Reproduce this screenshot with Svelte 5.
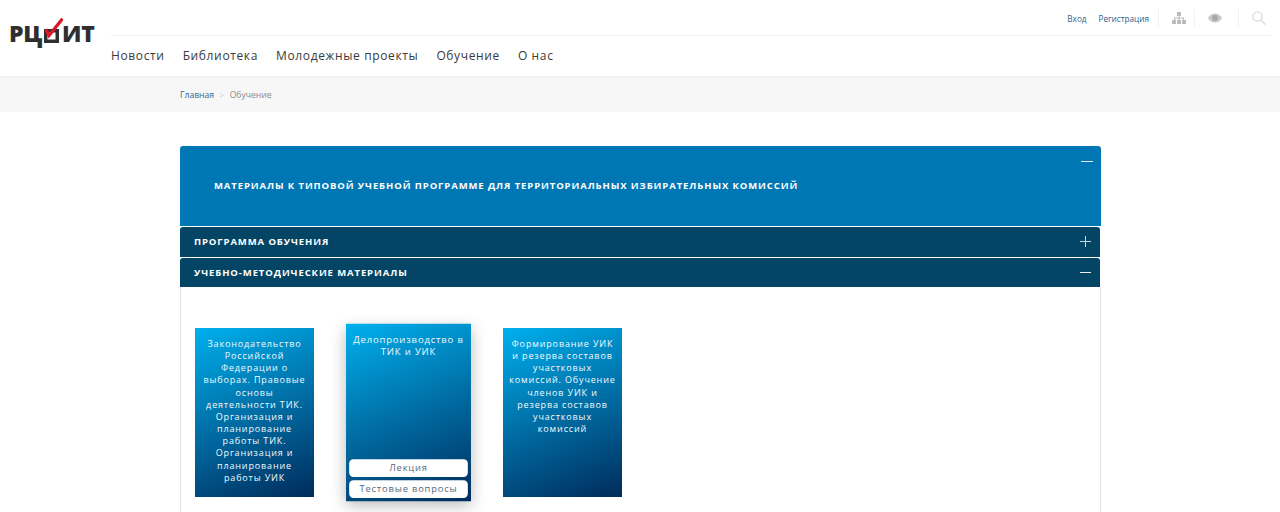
<script>
  const nav = ['Новости', 'Библиотека', 'Молодежные проекты', 'Обучение', 'О нас'];
</script>

<div class="page">
  <header class="header">
    <div class="logo" aria-label="РЦОИТ">
      <span class="logo-text">РЦ</span>
      <svg class="logo-box" width="20" height="28" viewBox="0 0 20 28">
        <rect x="2.75" y="12.75" width="11.5" height="10.5" fill="none" stroke="#2f2f2f" stroke-width="3.5" />
        <path d="M2.7 11.3 L6 17.6 L19.6 0.6" fill="none" stroke="#d9182a" stroke-width="3.2" />
      </svg>
      <span class="logo-text">ИТ</span>
    </div>
    <div class="head-main">
      <div class="top-bar">
        <a class="top-link" href="#a">Вход</a>
        <a class="top-link reg" href="#a">Регистрация</a>
        <span class="sep"></span>
        <svg class="ico" width="14" height="13" viewBox="0 0 14 13" fill="#bcbcbc">
          <rect x="5" y="0" width="4" height="4" />
          <rect x="6.5" y="4" width="1" height="2" />
          <rect x="2" y="5.5" width="10" height="1" />
          <rect x="2" y="6" width="1" height="2" />
          <rect x="11" y="6" width="1" height="2" />
          <rect x="6.5" y="6" width="1" height="2" />
          <rect x="0" y="8" width="4" height="4" />
          <rect x="5" y="8" width="4" height="4" />
          <rect x="10" y="8" width="4" height="4" />
        </svg>
        <span class="sep tight"></span>
        <svg class="ico" width="14" height="10" viewBox="0 0 14 10">
          <path d="M0 5 C3 -1 11 -1 14 5 C11 11 3 11 0 5Z" fill="#c9c9c9" />
          <circle cx="7" cy="5" r="3" fill="#a8a8a8" />
        </svg>
        <span class="sep wide"></span>
        <svg class="ico" width="14" height="14" viewBox="0 0 14 14" fill="none" stroke="#dcdcdc" stroke-width="1.4">
          <circle cx="5.5" cy="5.5" r="4.6" />
          <path d="M9 9 L13.5 13.5" />
        </svg>
      </div>
      <nav class="nav">
        {#each nav as item}
          <a href="#a">{item}</a>
        {/each}
      </nav>
    </div>
  </header>

  <div class="crumbs">
    <a href="#a">Главная</a>
    <span class="gt">&gt;</span>
    <span class="cur">Обучение</span>
  </div>

  <main class="panel">
    <div class="panel-head">
      <h2>Материалы к типовой учебной программе для территориальных избирательных комиссий</h2>
      <span class="minus top"></span>
    </div>
    <div class="row">
      <span>Программа обучения</span>
      <span class="plus"></span>
    </div>
    <div class="row second">
      <span>Учебно-методические материалы</span>
      <span class="minus"></span>
    </div>
    <div class="panel-body">
      <div class="card">
        Законодательство Российской Федерации о выборах. Правовые основы деятельности ТИК. Организация и планирование работы ТИК. Организация и планирование работы УИК
      </div>
      <div class="card active">
        <div class="card-title">Делопроизводство в ТИК и УИК</div>
        <div class="btns">
          <a href="#a">Лекция</a>
          <a href="#a">Тестовые вопросы</a>
        </div>
      </div>
      <div class="card">
        Формирование УИК и резерва составов участковых комиссий. Обучение членов УИК и резерва составов участковых комиссий
      </div>
    </div>
  </main>
</div>

<style>
  :global(body) {
    margin: 0;
    background: #fff;
    font-family: "Open Sans", sans-serif;
  }
  .page {
    height: 512px;
    overflow: hidden;
  }
  a {
    text-decoration: none;
  }
  .header {
    height: 76px;
    display: flex;
    background: #fff;
    box-shadow: 0 1px 3px rgba(0, 0, 0, 0.05);
    position: relative;
  }
  .logo {
    width: 111px;
    padding: 18px 0 0 9px;
    box-sizing: border-box;
    display: flex;
    align-items: flex-start;
    flex: none;
  }
  .logo-text {
    font-family: "Open Sans", sans-serif;
    font-weight: 800;
    font-size: 23px;
    line-height: 28px;
    margin-top: 1px;
    color: #2f2f2f;
    letter-spacing: -0.3px;
  }
  .logo-box {
    flex: none;
    margin: 0 -1px 0 1px;
  }
  .head-main {
    flex: 1;
    margin-right: 8px;
  }
  .top-bar {
    height: 36px;
    border-bottom: 1px solid #f2f2f2;
    display: flex;
    align-items: center;
    justify-content: flex-end;
    padding: 1px 6px 0 0;
    box-sizing: border-box;
  }
  .top-link {
    font-size: 8.2px;
    color: #33608a;
    margin-top: 1px;
  }
  .reg {
    margin-left: 12px;
  }
  .sep {
    width: 1px;
    height: 18px;
    background: #f2f2f2;
    margin: 0 13px 0 9px;
  }
  .sep.tight {
    margin-left: 8px;
  }
  .sep.wide {
    margin: 0 13px 0 16px;
  }
  .ico {
    flex: none;
  }
  .nav {
    display: flex;
    gap: 18px;
    padding-top: 11px;
  }
  .nav a {
    font-size: 12px;
    line-height: 18px;
    letter-spacing: 0.63px;
    color: #3a3a3a;
  }
  .crumbs {
    height: 36px;
    background: #f7f7f7;
    box-sizing: border-box;
    padding: 1px 0 0 180px;
    display: flex;
    align-items: center;
    font-size: 8.6px;
  }
  .crumbs a {
    color: #2f6a8f;
  }
  .gt {
    color: #c8c8c8;
    margin: 0 5.5px;
    font-size: 8px;
  }
  .cur {
    color: #8a8a8a;
  }
  .panel {
    width: 921px;
    margin: 34px 0 0 180px;
  }
  .panel-head {
    height: 80px;
    background: #0077b5;
    border-radius: 3px 3px 0 0;
    display: flex;
    align-items: center;
    padding: 0 33px 1px 34px;
    box-sizing: border-box;
    position: relative;
    margin-bottom: 1px;
  }
  h2 {
    margin: 0;
    font-size: 9.5px;
    font-weight: 700;
    letter-spacing: 0.9px;
    text-transform: uppercase;
    color: #fff;
  }
  .row {
    height: 30px;
    background: #044566;
    display: flex;
    align-items: center;
    justify-content: space-between;
    padding: 0 9px 1px 14px;
    box-sizing: border-box;
    font-size: 9.5px;
    font-weight: 700;
    letter-spacing: 0.9px;
    text-transform: uppercase;
    color: #fff;
    margin: 0 1px 1px 0;
    border-radius: 3px 3px 0 0;
  }
  .row.second {
    height: 29px;
    margin-bottom: 0;
    padding-bottom: 0;
  }
  .minus {
    width: 11px;
    height: 1px;
    background: #e8eef2;
  }
  .minus.top {
    position: absolute;
    right: 8px;
    top: 15px;
    width: 12px;
  }
  .plus {
    width: 11px;
    height: 11px;
    background:
      linear-gradient(#c9d8e0, #c9d8e0) center / 100% 1px no-repeat,
      linear-gradient(#c9d8e0, #c9d8e0) center / 1px 100% no-repeat;
  }
  .panel-body {
    border-left: 1px solid #e3e3e3;
    border-right: 1px solid #e3e3e3;
    padding: 41px 0 0 14px;
    display: flex;
    gap: 35px;
    height: 300px;
    box-sizing: border-box;
    align-items: flex-start;
  }
  .card {
    width: 119px;
    height: 169px;
    box-sizing: border-box;
    flex: none;
    background: linear-gradient(158deg, #00b0ee 0%, #002c5c 100%);
    color: #f2fafe;
    font-size: 9px;
    line-height: 12.15px;
    letter-spacing: 0.85px;
    text-align: center;
    padding: 10px 6px 0;
  }
  .card.active {
    transform: scale(1.05);
    box-shadow: 0 5px 14px rgba(0, 0, 0, 0.28);
    display: flex;
    flex-direction: column;
    justify-content: space-between;
    padding: 9px 2.6px 3px;
    font-size: 9px;
    line-height: 12.4px;
    letter-spacing: 0.8px;
  }
  .btns {
    display: flex;
    flex-direction: column;
    gap: 3.4px;
  }
  .btns a {
    display: block;
    background: #fff;
    border-radius: 4px;
    height: 16.8px;
    line-height: 16.8px;
    color: #55687a;
    font-size: 8.9px;
    letter-spacing: 0.8px;
    white-space: nowrap;
  }
</style>
